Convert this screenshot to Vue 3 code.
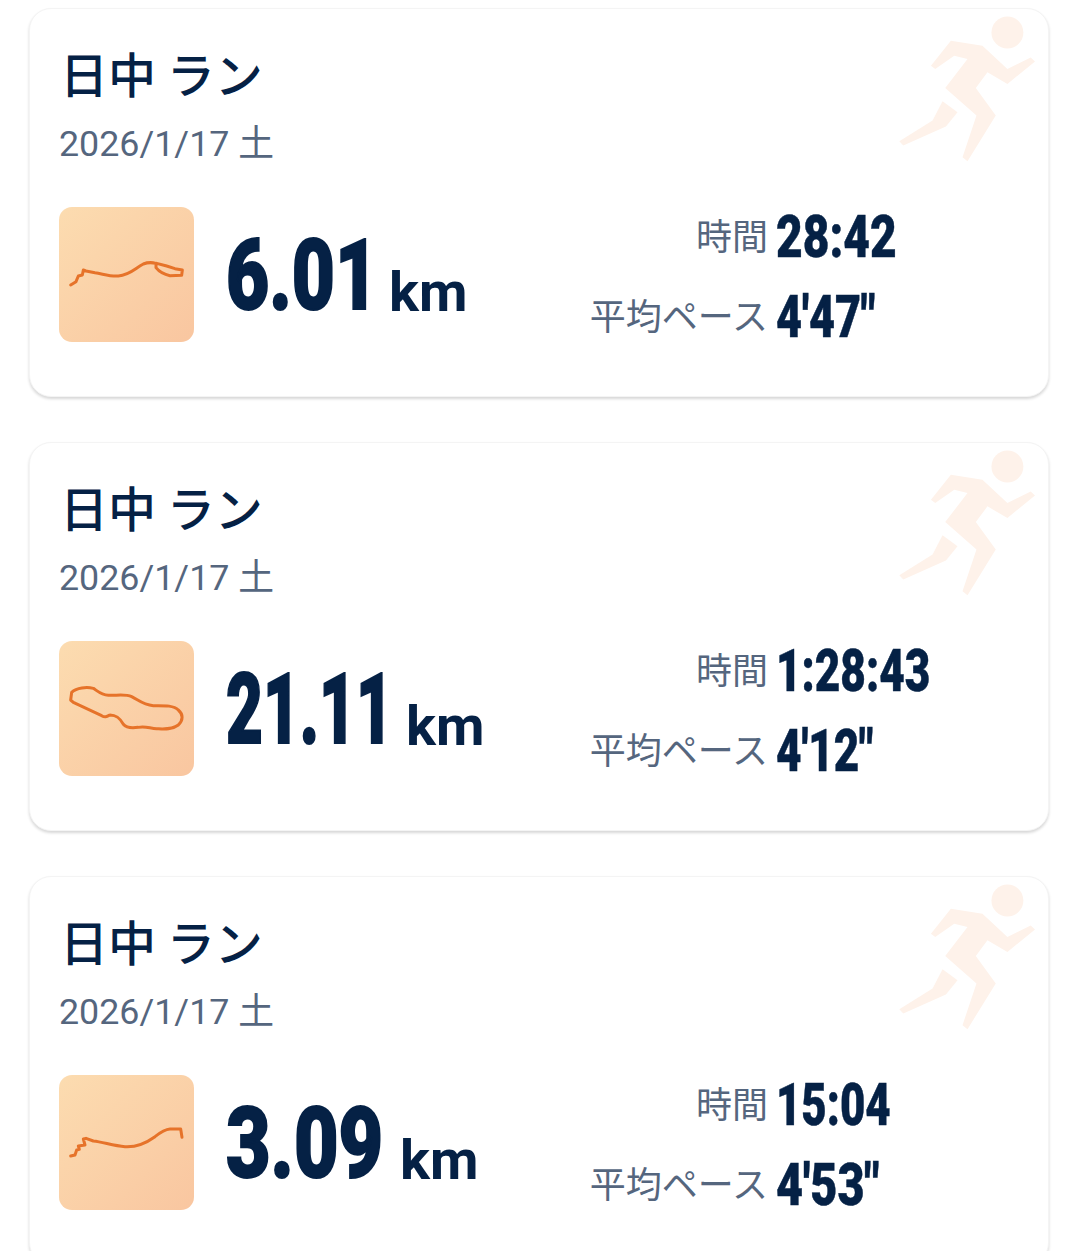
<script setup>
import { onMounted } from "vue";

// no condensed face is installed, so Roboto Black is squeezed to the width each value has in the design
const runs = [
  {
    id: 1,
    distance: "6.01",
    distanceBox: 144,
    distanceWidth: 152,
    time: "28:42",
    timeWidth: 121,
    pace: "4'47\"",
    paceWidth: 99,
    box: "27 21 405 405",
    route:
      "M62 255L78 245L85 228L97 225L100 210L108 213L135 218C160 222 180 230 205 228C240 225 255 205 280 192C295 186 310 188 318 190L318 203C325 212 340 223 360 227L395 226L397 210L375 206L350 198L320 190",
  },
  {
    id: 2,
    distance: "21.11",
    distanceBox: 161,
    distanceWidth: 167,
    time: "1:28:43",
    timeWidth: 154,
    pace: "4'12\"",
    paceWidth: 97,
    box: "27 18 405 405",
    route:
      "M62 195L65 172C80 158 110 155 130 160C145 170 155 180 175 181C200 182 225 176 245 185C265 195 280 210 310 212C340 212 370 210 385 225C400 238 400 255 385 270C365 285 340 282 320 281C300 280 285 272 265 277C245 280 230 280 220 268C210 250 200 240 180 240C170 245 165 248 155 242L70 202Z",
  },
  {
    id: 3,
    distance: "3.09",
    distanceBox: 155,
    distanceWidth: 157,
    time: "15:04",
    timeWidth: 115,
    pace: "4'53\"",
    paceWidth: 103,
    box: "27 15 405 405",
    route:
      "M62 258L75 255L80 240L88 238L85 228L105 225L100 207L108 205L130 213C160 216 190 228 225 230C260 232 290 218 315 200C330 188 345 178 360 177L392 177L396 202",
  },
];

onMounted(() => {
  document.querySelectorAll(".fit").forEach((el) => {
    el.style.transform = `scaleX(${el.dataset.width / el.offsetWidth})`;
  });
});
</script>

<template>
  <main class="list">
    <article v-for="run in runs" :key="run.id" class="card">
      <svg class="runner" viewBox="50 40 430 450">
        <circle cx="385" cy="95" r="48" />
        <path d="M155 195L215 120L310 135L385 205L455 170L468 182L385 250L325 215L290 262L350 345L265 482L250 470L292 345L198 262L265 175L225 165L168 205Z" />
        <path d="M190 302L235 335L200 378L72 435L60 422L160 360Z" />
      </svg>
      <h2 class="title">日中 ラン</h2>
      <div class="date">2026/1/17 土</div>
      <div class="body">
        <div class="thumb">
          <svg :viewBox="run.box">
            <path :d="run.route" />
          </svg>
        </div>
        <div class="distance">
          <div class="num" :style="{ width: run.distanceBox + 'px' }">
            <span class="fit" :data-width="run.distanceWidth">{{ run.distance }}</span>
          </div>
          <span class="unit">km</span>
        </div>
        <dl class="stats">
          <dt>時間</dt>
          <dd><span class="fit" :data-width="run.timeWidth">{{ run.time }}</span></dd>
          <dt>平均ペース</dt>
          <dd><span class="fit" :data-width="run.paceWidth">{{ run.pace }}</span></dd>
        </dl>
      </div>
    </article>
  </main>
</template>

<style scoped>
.list {
  height: 1251px;
  box-sizing: border-box;
  overflow: hidden;
  padding: 8px 30px 0 29px;
  display: flex;
  flex-direction: column;
  gap: 45px;
  background: #fff;
}

.card {
  position: relative;
  flex: none;
  height: 389px;
  box-sizing: border-box;
  padding: 32px 29px 0 29px;
  background: #fff;
  border-radius: 22px;
  border: 1px solid #f4f4f4;
  box-shadow: 0 2px 3px rgba(0, 0, 0, 0.16);
  font-family: Roboto, "Noto Sans CJK JP", sans-serif;
}

.runner {
  position: absolute;
  top: 5px;
  right: 9px;
  width: 143px;
  height: 150px;
  fill: #fef2ea;
}

.title {
  margin: 0 0 0 1px;
  font-family: "Noto Sans CJK JP", sans-serif;
  font-size: 48px;
  line-height: 62px;
  font-weight: 500;
  color: #052145;
}

.date {
  margin-top: 19px;
  font-size: 35.8px;
  line-height: 44px;
  color: #55667e;
}

.body {
  display: flex;
  align-items: center;
  margin-top: 37px;
}

.thumb {
  flex: none;
  width: 135px;
  height: 135px;
  border-radius: 13px;
  background: linear-gradient(135deg, #fcdcb0, #f9c6a0);
}

.thumb svg {
  display: block;
  width: 100%;
  height: 100%;
  fill: none;
  stroke: #e6732a;
  stroke-width: 9;
  stroke-linejoin: round;
  stroke-linecap: round;
}

.distance {
  margin-left: 32px;
  display: flex;
  align-items: flex-end;
  color: #052145;
}

.fit {
  display: inline-block;
  white-space: nowrap;
  transform-origin: left center;
  font-family: Roboto, sans-serif;
  font-weight: 900;
  color: #052145;
}

.num {
  height: 100px;
  font-size: 98px;
  line-height: 102px;
}

.num .fit {
  -webkit-text-stroke: 2px #052145;
}

.unit {
  margin: 0 0 3px 19px;
  font-size: 56px;
  line-height: 60px;
  font-weight: 700;
}

.stats {
  margin: 3px 0 0 auto;
  display: grid;
  grid-template-columns: 180px 242px;
  column-gap: 9px;
  row-gap: 20px;
}

.stats dt {
  text-align: right;
  font-family: "Noto Sans CJK JP", sans-serif;
  font-size: 36px;
  line-height: 56px;
  color: #55667e;
}

.stats dd {
  margin: 0 0 0 -1px;
  height: 60px;
  font-size: 59px;
  line-height: 62px;
}

.stats dd .fit {
  -webkit-text-stroke: 0.5px #052145;
}
</style>
